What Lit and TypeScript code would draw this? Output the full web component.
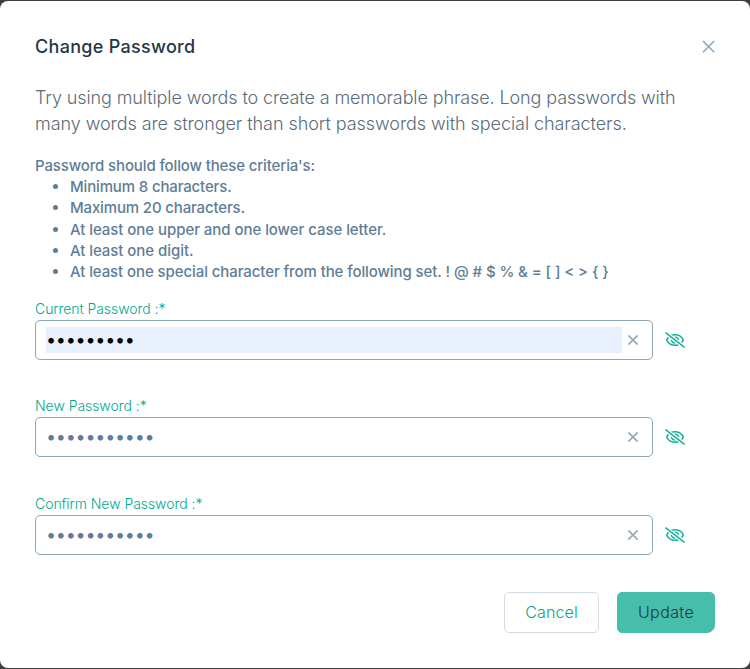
import { LitElement, html, css } from "lit";
import { customElement, property } from "lit/decorators.js";

@customElement("password-field")
class PasswordField extends LitElement {
  @property() label = "";
  @property() value = "";
  @property() hint = "";
  @property({ type: Boolean, reflect: true }) filled = false;

  static styles = css`
    :host { display: block; height: 97.5px; font-family: Inter, "Liberation Sans", sans-serif; }
    .label { display: block; height: 20px; line-height: 18px; font-size: 14px; font-weight: 300; letter-spacing: -0.05px; color: #00a88f; white-space: nowrap; }
    .row { display: flex; align-items: center; gap: 12px; }
    .box { box-sizing: border-box; width: 618px; height: 40px; border: 1px solid #8ea4b8; border-radius: 5px; display: flex; align-items: center; padding: 0 14px 0 10px; gap: 6px; }
    .input { flex: none; width: 576px; box-sizing: border-box; height: 26px; border: 0; outline: 0; margin: 0; padding: 0 0 1px; background: transparent; font: 400 18px Inter, sans-serif; letter-spacing: -0.27px; color: #5f7d95; }
    .input::placeholder { color: #5f7d95; opacity: 1; }
    :host([filled]) .input { background: #e8f0fe; color: #000; padding: 0; }
    .clear { width: 10px; height: 10px; flex: none; stroke: #94a8b8; stroke-width: 1.6; fill: none; }
    .eye { width: 20px; height: 16px; flex: none; fill: none; stroke: #12b39b; stroke-width: 1.6; }
    .gap { stroke: #fff; stroke-width: 4; }
  `;

  render() {
    return html`
      <label class="label">${this.label}</label>
      <div class="row">
        <div class="box">
          <input class="input" type=${this.filled ? "password" : "text"} .value=${this.value} placeholder=${this.hint} />
          <svg class="clear" viewBox="0 0 10 10"><path d="M.4.4l9.200 9.200M9.600.4L.4 9.600" /></svg>
        </div>
        <svg class="eye" viewBox="0 0 20 16">
          <path d="M6.100 3.300C7.200 2.900 8.500 2.700 10 2.700c3.600 0 6.400 1.700 8 4.600.2.4.2.9 0 1.300-.4.800-.9 1.400-1.500 2" />
          <path d="M3.800 5.200C3.100 5.800 2.500 6.500 2 7.300c-.2.4-.2.9 0 1.300 1.600 2.900 4.400 4.700 8 4.700 1.400 0 2.700-.3 3.800-.8" />
          <path d="M9.600 5.200c2.200 0 3.700 1.100 3.900 3.100M6.500 7.700c.1 2 1.600 3.300 3.900 3.300" />
          <path class="gap" d="M3.500 3l13 10" />
          <path d="M.4.6l19.200 14.800" />
        </svg>
      </div>
    `;
  }
}

@customElement("app-root")
class AppRoot extends LitElement {
  static styles = css`
    :host { display: block; box-sizing: border-box; height: 669px; padding: 1px 0; background: #3e3e40; font-family: Inter, "Liberation Sans", sans-serif; color: #5f7689; }
    .dialog { box-sizing: border-box; height: 667px; background: #fff; border-radius: 8px; padding: 34px 35px 35px; display: flex; flex-direction: column; overflow: hidden; }
    .head { display: flex; justify-content: space-between; align-items: center; height: 23px; }
    .title { margin: 0; font-size: 18px; font-weight: 500; letter-spacing: 0.3px; line-height: 23px; color: #253746; white-space: nowrap; }
    .close { width: 13px; height: 13px; fill: none; stroke: #8fa5b8; stroke-width: 1.6; }
    .intro { margin: 27px 0 0; font-size: 18px; font-weight: 300; line-height: 26px; white-space: nowrap; color: #5a6c7b; }
    .first { letter-spacing: -0.11px; }
    .second { letter-spacing: -0.065px; }
    .rules { margin-top: 18px; font-size: 15px; font-weight: 500; line-height: 21.2px; letter-spacing: -0.13px; white-space: nowrap; color: #5f7d95; }
    .list { margin: 0; padding: 0 0 0 35px; letter-spacing: -0.15px; }
    .long { letter-spacing: -0.055px; }
    .longest { letter-spacing: -0.09px; }
    .fields { margin-top: 17.5px; }
    .actions { margin-top: auto; display: flex; justify-content: flex-end; gap: 18px; }
    .button { box-sizing: border-box; height: 41px; border-radius: 5px; border: 1px solid #d3dce4; background: #fff; color: #00a88f; font: 300 16px Inter, sans-serif; letter-spacing: 0.15px; width: 95px; padding: 0 0 2px; }
    .primary { width: 98px; border-color: #46beac; border-bottom-right-radius: 8px; background: #46beac; color: #253746; letter-spacing: 0.4px; }
  `;

  render() {
    const rules = [
      ["", "Minimum 8 characters."],
      ["", "Maximum 20 characters."],
      ["long", "At least one upper and one lower case letter."],
      ["long", "At least one digit."],
      ["longest", "At least one special character from the following set. ! @ # $ % & = [ ] < > { }"],
    ];
    const hint = "•".repeat(11);
    return html`
      <div class="dialog">
        <div class="head">
          <h1 class="title">Change Password</h1>
          <svg class="close" viewBox="0 0 13 13"><path d="M1 1l11.200 11.200M12.200 1L1 12.200" /></svg>
        </div>
        <p class="intro"><span class="first">Try using multiple words to create a memorable phrase. Long passwords with</span><br /><span class="second">many words are stronger than short passwords with special characters.</span></p>
        <div class="rules">
          Password should follow these criteria's:
          <ul class="list">${rules.map(([size, text]) => html`<li class=${size}>${text}</li>`)}</ul>
        </div>
        <div class="fields">
          <password-field label="Current Password :*" value="memorable" filled></password-field>
          <password-field label="New Password :*" hint=${hint}></password-field>
          <password-field label="Confirm New Password :*" hint=${hint}></password-field>
        </div>
        <div class="actions">
          <button class="button">Cancel</button>
          <button class="button primary">Update</button>
        </div>
      </div>
    `;
  }
}
